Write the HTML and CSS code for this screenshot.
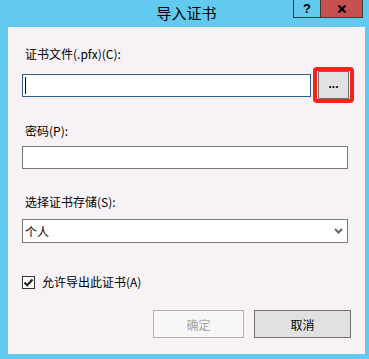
FILE: index.html
```html
<!DOCTYPE html>
<html lang="zh-CN">
<head>
  <meta charset="UTF-8" />
  <title>导入证书</title>
  <link rel="stylesheet" href="styles.css">
</head>
<body>

  <div class="window">
    <div class="titlebar">
      <div class="title">导入证书</div>
      <div class="caption-buttons">
        <div class="cap-btn help">?</div>
        <div class="cap-btn close">
          <svg width="10" height="8" viewBox="0 0 10 8">
            <path d="M1.5 0.5 L8.5 7.5 M8.5 0.5 L1.5 7.5" stroke="#000" stroke-width="2.2" fill="none"/>
          </svg>
        </div>
      </div>
    </div>

    <div class="client">
      <div class="label label-file">证书文件(.pfx)(C):</div>
      <div class="file-row">
        <div class="field focused"><span class="caret"></span></div>
        <div class="browse-wrap">
          <button class="btn browse">...</button>
        </div>
      </div>

      <div class="label label-pass">密码(P):</div>
      <div class="field pass"></div>

      <div class="label label-store">选择证书存储(S):</div>
      <div class="select">
        <span>个人</span>
        <svg class="chevron" width="9" height="6" viewBox="0 0 9 6">
          <path d="M1 1 L4.5 4.5 L8 1" stroke="#666" stroke-width="2" fill="none"/>
        </svg>
      </div>

      <div class="check-row">
        <span class="checkbox">
          <svg width="11" height="11" viewBox="0 0 11 11">
            <path d="M1.5 5.5 L4.2 8.2 L9.5 2.5" stroke="#222" stroke-width="2.2" fill="none"/>
          </svg>
        </span>
        <span class="check-label">允许导出此证书(A)</span>
      </div>

      <div class="actions">
        <button class="btn ok" disabled>确定</button>
        <button class="btn cancel">取消</button>
      </div>
    </div>
  </div>

</body>
</html>
```

FILE: styles.css
```css
body {
  margin: 0;
  background: #62c9ef;
  font-family: "Noto Sans CJK SC", "Liberation Sans", sans-serif;
  font-size: 12px;
  color: #000;
}

.window {
  width: 369px;
  height: 359px;
  display: flex;
  flex-direction: column;
}

/* title bar */
.titlebar {
  height: 27px;
  display: grid;
  grid-template-columns: 1fr auto 1fr;
}

.title {
  grid-column: 2;
  font-size: 15px;
  line-height: 25px;
  padding-left: 4px;
}

.caption-buttons {
  grid-column: 3;
  justify-self: end;
  display: flex;
  align-items: flex-start;
  margin-right: 6px;
}

.cap-btn {
  height: 18px;
  box-sizing: border-box;
  border: 1px solid #3a3a3a;
  border-top: none;
  display: flex;
  align-items: center;
  justify-content: center;
}

.help {
  width: 28px;
  font-family: "Liberation Sans", sans-serif;
  font-weight: bold;
  font-size: 13px;
  line-height: 1;
}

.close {
  width: 42px;
  border-left: none;
  background: #c75050;
}

/* client area */
.client {
  flex: 1;
  margin: 0 4px 5px 8px;
  background: #f6f2f6;
  padding: 0 16px 0 14px;
  display: flex;
  flex-direction: column;
}

.label {
  line-height: 16px;
  padding-left: 3px;
}

.label-file { margin-top: 19px; }
.label-pass { margin-top: 24px; }
.label-store { margin-top: 25px; }

.file-row {
  margin-top: 9px;
  height: 28px;
  display: flex;
  align-items: center;
  gap: 7px;
}

.field {
  height: 23px;
  box-sizing: border-box;
  background: #fff;
  border: 1px solid #7a7a7a;
  margin-right: 1px;
}

.file-row .field {
  flex: 1;
  margin-right: 0;
}

.field.focused {
  border-color: #2f5f8f;
  padding: 2px 0 0 2px;
}

.caret {
  display: block;
  width: 1px;
  height: 17px;
  background: #000;
}

.field.pass {
  margin-top: 7px;
}

.browse-wrap {
  position: relative;
}

/* red annotation round the browse button */
.browse-wrap::after {
  content: "";
  position: absolute;
  top: -4px;
  bottom: -4px;
  left: -5px;
  right: -5px;
  border: 4px solid #f7231b;
  border-radius: 4px;
  box-sizing: border-box;
}

.btn {
  font-family: "Noto Sans CJK SC", "Liberation Sans", sans-serif;
  font-size: 12px;
  background: #e1e1e1;
  border: 1px solid #707070;
  border-radius: 0;
  color: #000;
  padding: 0;
  box-sizing: border-box;
}

.browse {
  display: block;
  width: 31px;
  height: 28px;
  font-weight: bold;
  font-family: "Liberation Sans", sans-serif;
  line-height: 1;
  padding-bottom: 2px;
}

.select {
  margin-top: 9px;
  height: 24px;
  box-sizing: border-box;
  background: #fff;
  border: 1px solid #7a7a7a;
  margin-right: 1px;
  padding: 0 3px 0 2px;
  display: flex;
  align-items: center;
  justify-content: space-between;
}

.chevron {
  margin-right: 1px;
}

.check-row {
  margin-top: 31px;
  height: 16px;
  display: flex;
  align-items: center;
  gap: 7px;
}

.checkbox {
  width: 13px;
  height: 13px;
  box-sizing: border-box;
  border: 1px solid #333;
  background: #fff;
  display: flex;
  align-items: center;
  justify-content: center;
}

.check-label {
  line-height: 16px;
}

.actions {
  margin-top: 20px;
  margin-right: -2px;
  display: flex;
  justify-content: flex-end;
  gap: 10px;
}

.actions .btn {
  height: 28px;
}

.ok {
  width: 91px;
  background: #f7f7f7;
  border-color: #b2b2b2;
  color: #a3a3a3;
}

.cancel {
  width: 97px;
}
```
